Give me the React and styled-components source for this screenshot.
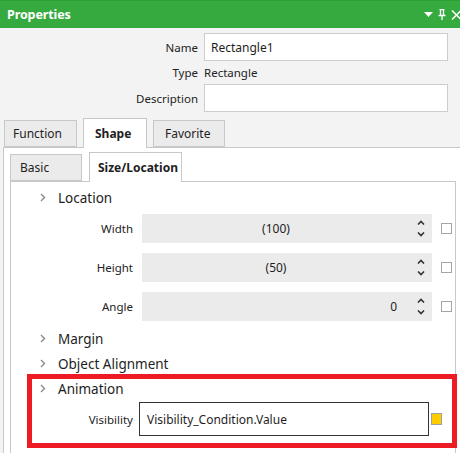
import React from "react"
import styled, { createGlobalStyle } from "styled-components"

const GlobalStyle = createGlobalStyle`
  html, body {
    margin: 0;
    padding: 0;
    background: #f3f3f3;
    overflow: hidden;
  }
  body {
    font-family: "Noto Sans", "Segoe UI", "Liberation Sans", sans-serif;
    color: #1e1e1e;
  }
  * { box-sizing: border-box; }
`

const Window = styled.div`
  width: 460px;
  height: 453px;
  display: flex;
  flex-direction: column;
  overflow: hidden;
`

const TitleBar = styled.div`
  height: 28px;
  flex: none;
  background: #35ab3f;
  border-top: 1px solid #2f9f39;
  display: flex;
  align-items: center;
  padding: 0 0 0 7px;
  color: #fff;
`

const Title = styled.div`
  font-size: 12.5px;
  font-weight: 700;
  flex: 1;
  letter-spacing: -0.1px;
`

const TitleTools = styled.div`
  display: flex;
  align-items: center;
  gap: 5px;
  margin-right: -2px;
`

const HeaderForm = styled.div`
  display: grid;
  grid-template-columns: 198px 244px;
  grid-template-rows: 28px 23px 28px;
  column-gap: 6px;
  padding-top: 5px;
  align-items: center;
  flex: none;
`

const FieldLabel = styled.div`
  text-align: right;
  font-size: 11.5px;
  color: #222;
`

const TextBox = styled.div`
  height: 28px;
  background: #fff;
  border: 1px solid #cdcdcd;
  display: flex;
  align-items: center;
  padding-left: 6px;
  font-size: 12px;
`

const Plain = styled.div`
  font-size: 11.5px;
  color: #222;
`

const TabStrip = styled.div`
  display: flex;
  align-items: flex-end;
  gap: ${p => p.gap}px;
  padding-left: ${p => p.indent}px;
  height: 30px;
  margin-top: ${p => p.top}px;
  margin-bottom: -1px;
  flex: none;
  position: relative;
  z-index: 1;
`

const Tab = styled.div`
  width: ${p => p.w}px;
  height: ${p => (p.active ? 30 : 27)}px;
  margin-bottom: ${p => (p.active ? 0 : 1)}px;
  background: ${p => (p.active ? "#fff" : "#ebebeb")};
  border: 1px solid #c8c8c8;
  border-bottom: ${p => (p.active ? "none" : "1px solid #c8c8c8")};
  display: flex;
  align-items: center;
  padding-left: ${p => p.pad}px;
  padding-bottom: ${p => (p.active ? 0 : 1)}px;
  font-size: 12px;
  font-weight: ${p => (p.active ? 700 : 400)};
  color: #1e1e1e;
`

const OuterPanel = styled.div`
  flex: 1;
  margin-left: 3px;
  border-left: 1px solid #c8c8c8;
  border-top: 1px solid #c8c8c8;
  background: #fff;
  display: flex;
  flex-direction: column;
`

const InnerPanel = styled.div`
  flex: 1;
  margin-left: 6px;
  width: 446px;
  border: 1px solid #c8c8c8;
  border-bottom: none;
  background: #fff;
  padding-top: 3px;
`

const Section = styled.div`
  position: relative;
`

const SectionHead = styled.div`
  height: 25px;
  display: flex;
  align-items: center;
  padding-left: 29px;
  gap: 12px;
  font-size: 13.5px;
  color: #1e1e1e;
`

const Chevron = styled.svg`
  width: 6px;
  height: 9px;
  flex: none;
`

const Rows = styled.div`
  display: flex;
  flex-direction: column;
  gap: 10px;
  padding: 4px 0 5px;
`

const Row = styled.div`
  display: grid;
  grid-template-columns: 122px 290px 11px;
  column-gap: 9px;
  align-items: center;
  height: 29px;
`

const ExprRow = styled.div`
  display: grid;
  grid-template-columns: 122px 296px 11px;
  column-gap: 0;
  align-items: center;
  height: 36px;
`

const RowLabel = styled.div`
  text-align: right;
  font-size: 11.5px;
  color: #222;
`

const Spin = styled.div`
  height: 29px;
  background: #ebebeb;
  display: flex;
  align-items: center;
`

const SpinValue = styled.div`
  flex: 1;
  font-size: 12px;
  text-align: ${p => (p.right ? "right" : "center")};
  padding-right: ${p => (p.right ? 13 : 0)}px;
`

const SpinButtons = styled.div`
  width: 22px;
  display: flex;
  flex-direction: column;
  align-items: center;
  gap: 7px;
`

const Check = styled.div`
  width: 11px;
  height: 11px;
  border: 1px solid #a5a5a5;
  background: #fff;
`

const ExprBox = styled.div`
  height: 34px;
  margin-left: 6px;
  border: 1px solid #333;
  background: #fff;
  display: flex;
  align-items: center;
  padding-left: 7px;
  font-size: 12px;
`

const Marker = styled.div`
  width: 11px;
  height: 12px;
  margin-left: 2px;
  background: #ffcc00;
  border: 1px solid #a0a0a0;
`

const Highlight = styled.div`
  position: absolute;
  left: 16px;
  top: -2px;
  width: 430px;
  height: 74px;
  border: 5px solid #ed1c24;
  pointer-events: none;
`

const Arrow = ({ dir }) => (
  <svg width="8" height="5" viewBox="0 0 8 5">
    <path
      d={dir === "up" ? "M1 4.5 L4 1.5 L7 4.5" : "M1 0.5 L4 3.5 L7 0.5"}
      fill="none"
      stroke="#333"
      strokeWidth="1.6"
    />
  </svg>
)

const Expander = () => (
  <Chevron viewBox="0 0 6 9">
    <path d="M1 1 L4.5 4.5 L1 8" fill="none" stroke="#8a8a8a" strokeWidth="1.4" />
  </Chevron>
)

const SpinRow = ({ label, value, right }) => (
  <Row>
    <RowLabel>{label}</RowLabel>
    <Spin>
      <SpinValue right={right}>{value}</SpinValue>
      <SpinButtons>
        <Arrow dir="up" />
        <Arrow dir="down" />
      </SpinButtons>
    </Spin>
    <Check />
  </Row>
)

export default function App() {
  return (
    <Window>
      <GlobalStyle />
      <TitleBar>
        <Title>Properties</Title>
        <TitleTools>
          <svg width="9" height="5" viewBox="0 0 9 5">
            <path d="M0 0 H9 L4.5 5 Z" fill="#fff" />
          </svg>
          <svg width="8" height="11" viewBox="0 0 8 11">
            <path d="M1.5 0.5 H6.5 M2.5 0.5 V6.5 M5.5 0.5 V6.5 M0.5 6.5 H7.5 M4 6.5 V11" fill="none" stroke="#fff" strokeWidth="1.3" />
          </svg>
          <svg width="11" height="10" viewBox="0 0 11 10">
            <path d="M1 0.5 L10 9.5 M10 0.5 L1 9.5" fill="none" stroke="#fff" strokeWidth="1.5" />
          </svg>
        </TitleTools>
      </TitleBar>

      <HeaderForm>
        <FieldLabel>Name</FieldLabel>
        <TextBox>Rectangle1</TextBox>
        <FieldLabel>Type</FieldLabel>
        <Plain>Rectangle</Plain>
        <FieldLabel>Description</FieldLabel>
        <TextBox />
      </HeaderForm>

      <TabStrip gap={6} indent={4} top={6}>
        <Tab w={73} pad={8}>Function</Tab>
        <Tab w={64} pad={11} active>Shape</Tab>
        <Tab w={72} pad={11}>Favorite</Tab>
      </TabStrip>

      <OuterPanel>
        <TabStrip gap={7} indent={6} top={4}>
          <Tab w={72} pad={9}>Basic</Tab>
          <Tab w={93} pad={8} active>Size/Location</Tab>
        </TabStrip>

        <InnerPanel>
          <Section>
            <SectionHead>
              <Expander />
              Location
            </SectionHead>
            <Rows>
              <SpinRow label="Width" value="(100)" />
              <SpinRow label="Height" value="(50)" />
              <SpinRow label="Angle" value="0" right />
            </Rows>
          </Section>
          <Section>
            <SectionHead>
              <Expander />
              Margin
            </SectionHead>
          </Section>
          <Section>
            <SectionHead>
              <Expander />
              Object Alignment
            </SectionHead>
          </Section>
          <Section>
            <SectionHead>
              <Expander />
              Animation
            </SectionHead>
            <ExprRow>
              <RowLabel>Visibility</RowLabel>
              <ExprBox>Visibility_Condition.Value</ExprBox>
              <Marker />
            </ExprRow>
            <Highlight />
          </Section>
        </InnerPanel>
      </OuterPanel>
    </Window>
  )
}
